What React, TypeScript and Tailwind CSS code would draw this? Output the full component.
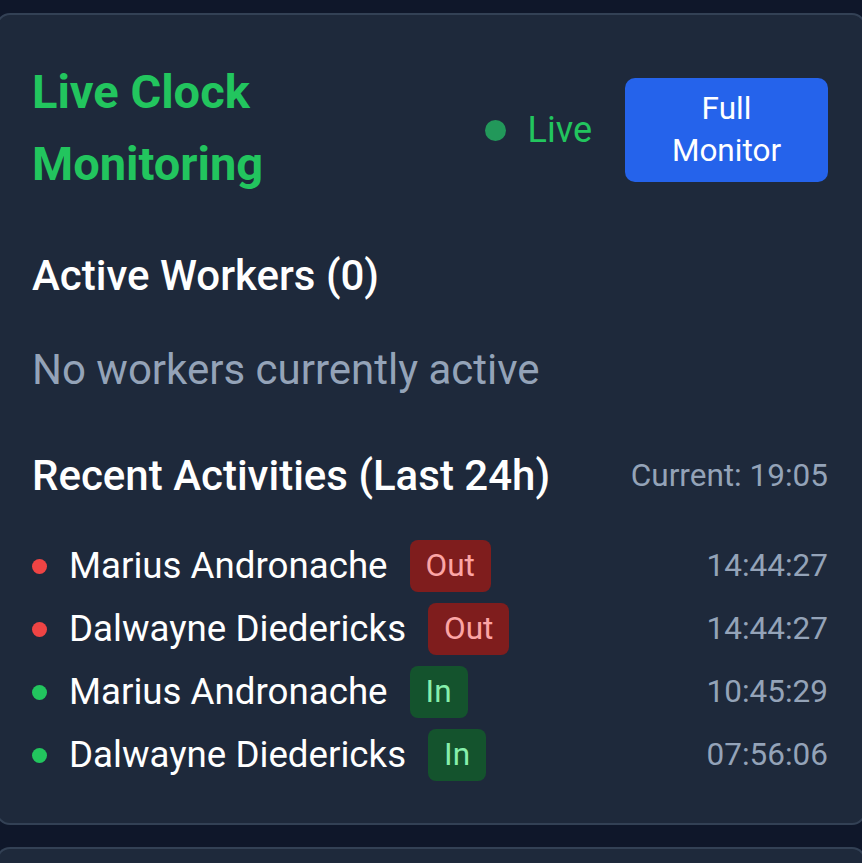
import React from 'react';

type Activity = {
  name: string;
  type: 'in' | 'out';
  time: string;
};

const activities: Activity[] = [
  { name: 'Marius Andronache', type: 'out', time: '14:44:27' },
  { name: 'Dalwayne Diedericks', type: 'out', time: '14:44:27' },
  { name: 'Marius Andronache', type: 'in', time: '10:45:29' },
  { name: 'Dalwayne Diedericks', type: 'in', time: '07:56:06' },
];

function ActivityRow({ activity }: { activity: Activity }) {
  const isOut = activity.type === 'out';
  return (
    <div className="flex items-center justify-between h-[52px]">
      <div className="flex items-center">
        <span
          className={`h-[15px] w-[15px] rounded-full ${isOut ? 'bg-[#ef4444]' : 'bg-[#22c55e]'}`}
        />
        <span className="ml-[22px] text-[36.7px] leading-[44px] text-white">{activity.name}</span>
        <span
          className={`ml-[22px] rounded-[8px] px-[16px] py-[4px] text-[31.5px] leading-[44px] ${
            isOut ? 'bg-[#7f1d1d] text-[#fca5a5]' : 'bg-[#14532d] text-[#86efac]'
          }`}
        >
          {isOut ? 'Out' : 'In'}
        </span>
      </div>
      <span className="text-[31.5px] leading-[44px] text-[#94a3b8]">{activity.time}</span>
    </div>
  );
}

export default function App() {
  return (
    <div className="min-h-screen overflow-hidden bg-[#0f172a] pt-[13px] font-['Roboto',sans-serif]">
      {/* Live clock card */}
      <div className="-mx-[4px] rounded-[14px] border-2 border-[#334155] bg-[#1e293b] pl-[34px] pr-[36px] pt-[41px] pb-[42px]">
        {/* Header */}
        <div className="flex items-center justify-between">
          <h2 className="w-[300px] text-[47px] font-bold leading-[72px] text-[#22c55e]">
            Live Clock Monitoring
          </h2>
          <div className="flex items-center gap-[33px] pt-[4px]">
            <div className="flex items-center gap-[22px]">
              <span className="h-[21px] w-[21px] rounded-full bg-[#22985a]" />
              <span className="text-[36px] leading-[44px] text-[#22c55e]">Live</span>
            </div>
            <button className="flex h-[104px] w-[203px] items-center justify-center rounded-[10px] bg-[#2563eb] text-[31.5px] leading-[42px] text-white">
              Full
              <br />
              Monitor
            </button>
          </div>
        </div>

        {/* Active workers */}
        <h3 className="mt-[45px] text-[42px] font-medium leading-[62px] text-white">Active Workers (0)</h3>
        <p className="mt-[32px] text-[42px] leading-[62px] text-[#94a3b8]">No workers currently active</p>

        {/* Recent activities */}
        <div className="mt-[44px] flex items-center justify-between">
          <h3 className="text-[42px] font-medium leading-[62px] text-white">Recent Activities (Last 24h)</h3>
          <span className="text-[31.5px] leading-[44px] text-[#94a3b8]">Current: 19:05</span>
        </div>

        <div className="mt-[33px] flex flex-col gap-[11px]">
          {activities.map((a, i) => (
            <ActivityRow key={i} activity={a} />
          ))}
        </div>
      </div>

      {/* Next card peeking in */}
      <div className="-mx-[4px] mt-[22px] h-[40px] rounded-t-[14px] border-2 border-b-0 border-[#334155] bg-[#1e293b]" />
    </div>
  );
}
